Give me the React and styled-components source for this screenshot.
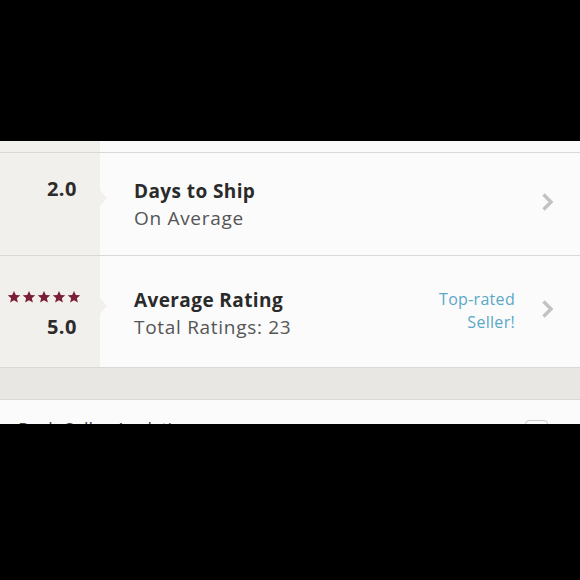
import React from 'react';
import styled, { createGlobalStyle } from 'styled-components';

const GlobalStyle = createGlobalStyle`
  html, body {
    margin: 0;
    padding: 0;
    background: #000;
  }
  body {
    font-family: "Open Sans", "Liberation Sans", sans-serif;
    -webkit-font-smoothing: antialiased;
  }
`;

const BEIGE = '#f2f0ec';
const LINE = '#dbd9d7';

const Screen = styled.div`
  width: 580px;
  height: 580px;
  display: flex;
  flex-direction: column;
  background: #000;
  overflow: hidden;
`;

const TopBlack = styled.div`
  height: 141px;
  flex: none;
`;

const Panel = styled.div`
  height: 283px;
  flex: none;
  background: #fbfbfb;
  display: flex;
  flex-direction: column;
  overflow: hidden;
`;

const TopStrip = styled.div`
  height: 11px;
  flex: none;
  display: grid;
  grid-template-columns: 100px 1fr;
  border-bottom: 1px solid ${LINE};
`;

const LeftFill = styled.div`
  background: ${BEIGE};
`;

const Row = styled.div`
  height: ${({ h }) => h}px;
  flex: none;
  display: grid;
  grid-template-columns: 100px 1fr auto 65px;
  align-items: center;
  border-bottom: 1px solid ${LINE};
`;

const Score = styled.div`
  position: relative;
  height: 100%;
  background: ${BEIGE};
  display: flex;
  flex-direction: column;
  align-items: flex-end;
  justify-content: center;
  padding-right: 23px;
  box-sizing: border-box;
  gap: 12px;

  &::after {
    content: '';
    position: absolute;
    right: -7px;
    top: 50%;
    margin-top: ${({ notch }) => notch}px;
    border-top: 8px solid transparent;
    border-bottom: 8px solid transparent;
    border-left: 7px solid ${BEIGE};
  }
`;

const Number = styled.div`
  font-size: 20px;
  font-weight: 700;
  letter-spacing: 0.5px;
  color: #2b2b2b;
  line-height: 22px;
`;

const Stars = styled.div`
  display: flex;
  gap: 1px;
  margin-right: -4px;
`;

const Info = styled.div`
  padding-left: 34px;
  padding-top: ${({ shift }) => shift}px;
  display: flex;
  flex-direction: column;
  gap: 5px;
`;

const Title = styled.div`
  font-size: 19px;
  font-weight: 700;
  letter-spacing: 0.4px;
  color: #2a2a2a;
  line-height: 22px;
  white-space: nowrap;
`;

const Sub = styled.div`
  font-size: 19px;
  letter-spacing: 0.7px;
  color: #555;
  line-height: 22px;
  white-space: nowrap;
`;

const Badge = styled.div`
  font-size: 16px;
  letter-spacing: 0.3px;
  color: #5aa7c7;
  text-align: right;
  line-height: 23px;
  margin-top: -1px;
`;

const Chevron = styled.div`
  display: flex;
  align-items: center;
  padding-left: 25px;
  margin-top: ${({ offset }) => offset}px;
`;

const Band = styled.div`
  height: 31px;
  flex: none;
  background: #e9e7e3;
  border-bottom: 1px solid ${LINE};
`;

const Footer = styled.div`
  flex: 1;
  display: flex;
  justify-content: space-between;
  align-items: flex-end;
  padding: 0 32px 0 18px;
  overflow: hidden;
`;

const FooterText = styled.div`
  font-size: 18px;
  color: #444;
  line-height: 18px;
  margin-bottom: -14px;
`;

const Box = styled.div`
  width: 21px;
  height: 21px;
  border: 1px solid #c8c8c8;
  border-radius: 4px;
  margin-bottom: -19px;
`;

const Star = () => (
  <svg width="14" height="14" viewBox="0 0 24 24">
    <path
      d="M12 1.5l3.1 7.1 7.6.6-5.8 5 1.8 7.4L12 17.7l-6.7 3.9 1.8-7.4-5.8-5 7.6-.6z"
      fill="#7b1f36"
    />
  </svg>
);

const ChevronIcon = () => (
  <svg width="16" height="22" viewBox="0 0 16 22">
    <path d="M3.5 3.5l7.5 7.5-7.5 7.5" fill="none" stroke="#c2c2c2" strokeWidth="3.4" />
  </svg>
);

export default function App() {
  return (
    <Screen>
      <GlobalStyle />
      <TopBlack />
      <Panel>
        <TopStrip>
          <LeftFill />
          <div />
        </TopStrip>
        <Row h={102}>
          <Score notch={-14}>
            <Number style={{ marginTop: -30 }}>2.0</Number>
          </Score>
          <Info shift={-1}>
            <Title>Days to Ship</Title>
            <Sub>On Average</Sub>
          </Info>
          <div />
          <Chevron offset={-4}>
            <ChevronIcon />
          </Chevron>
        </Row>
        <Row h={111}>
          <Score notch={-14}>
            <Stars style={{ marginTop: 4 }}>
              {[0, 1, 2, 3, 4].map(i => (
                <Star key={i} />
              ))}
            </Stars>
            <Number>5.0</Number>
          </Score>
          <Info shift={4}>
            <Title>Average Rating</Title>
            <Sub>Total Ratings: 23</Sub>
          </Info>
          <Badge>
            Top-rated
            <br />
            Seller!
          </Badge>
          <Chevron offset={-6}>
            <ChevronIcon />
          </Chevron>
        </Row>
        <Band />
        <Footer>
          <FooterText>Posh Seller Analytics</FooterText>
          <Box />
        </Footer>
      </Panel>
    </Screen>
  );
}
